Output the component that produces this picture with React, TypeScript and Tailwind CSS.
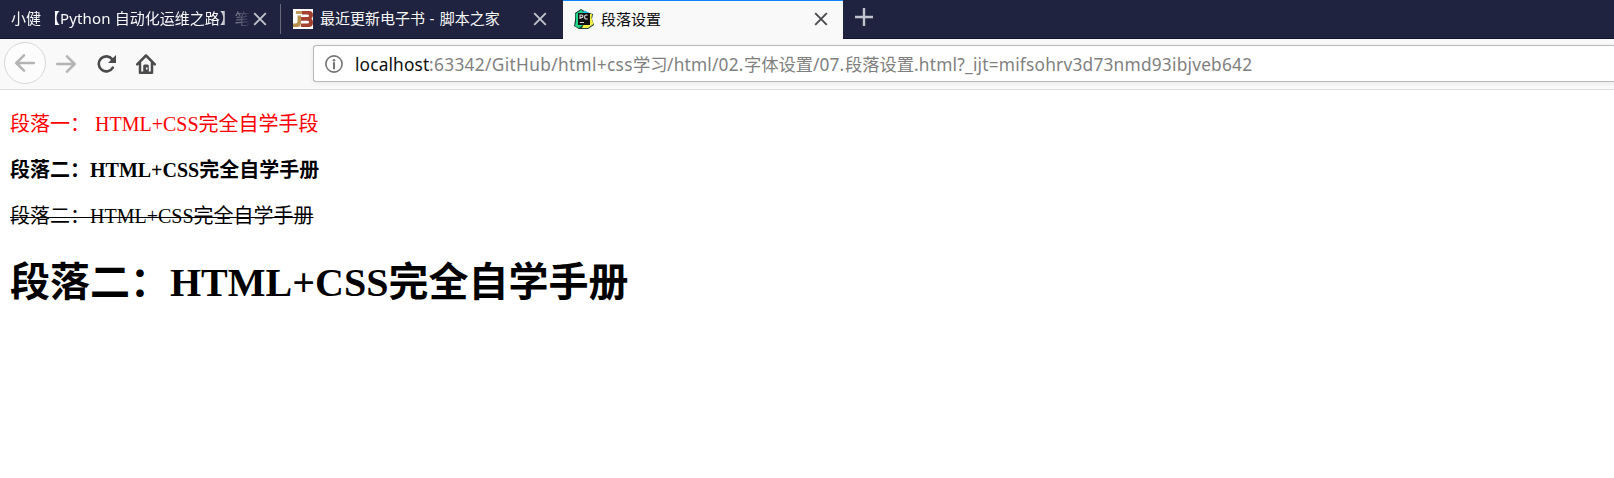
import React from 'react';

const ui = "font-['Noto_Sans','Noto_Sans_CJK_SC',sans-serif]";

function Close({ color }: { color: string }) {
  return (
    <svg width="14" height="14" viewBox="0 0 14 14" className="shrink-0" fill="none" stroke={color} strokeWidth="1.9">
      <path d="M1.2 1.2 12.8 12.8M12.8 1.2 1.2 12.8" />
    </svg>
  );
}

function ScriptHomeIcon() {
  return (
    <svg width="20" height="20" viewBox="0 0 20 20" className="shrink-0">
      <rect width="20" height="20" fill="#fff" />
      <path d="M3 2H9V5H3Z" fill="#c09a60" />
      <path d="M4.5 6.5H8V14Q8 18 4 18H0V14.5H2.5Q4.5 14.5 4.5 12.5Z" fill="#b8904e" />
      <path d="M9 2H16Q20 2 20 6Q20 8 18.5 9.5Q20 11 20 13.5Q20 18 15.5 18H8V14.5H14.5Q16 14.5 16 13.2Q16 11.8 14.5 11.8H8V8H14.5Q16 8 16 6.8Q16 5.5 14.5 5.5H9Z" fill="#a3402f" />
    </svg>
  );
}

function PyCharmIcon() {
  return (
    <svg width="20" height="20" viewBox="0 0 20 20" className="shrink-0">
      <path d="M1 4 7 0 12 3 19 5 18 10 20 16 14 20H5L0 17 1 11Z" fill="#173d30" />
      <path d="M1.5 5 7 1 11 4 9 16 5 19 1 17 2 12Z" fill="#21d789" />
      <path d="M11 1.5 15 4 12 6 8 4Z" fill="#18bfe0" />
      <path d="M15 5 18 5 17.5 9 19.5 15 14 19H8L10 15 16 14Z" fill="#f5ee45" />
      <rect x="4" y="4" width="12" height="12" fill="#111" />
      <path d="M6 10V6H7.4Q9 6 9 7.3T7.4 8.6H6M13.6 6.3Q10.6 5.2 10.6 8T13.6 9.7M5.8 13.5H10" fill="none" stroke="#e0e0e0" strokeWidth="1.1" />
    </svg>
  );
}

export default function App() {
  return (
    <div className="flex h-[478px] w-full flex-col overflow-hidden bg-white">
      <div className={`${ui} flex h-[39px] shrink-0 bg-[#202340] text-[15px] leading-[37px] text-[#f9f9fa] shadow-[inset_0_-1px_0_#14122e]`}>
        <div className="flex h-[37px] w-[280px] shrink-0 items-center pl-[11px]">
          <div className="w-[242px] whitespace-nowrap [mask-image:linear-gradient(to_right,#000_205px,transparent_240px)]">
            <span>小健 【</span><span className="tracking-[0.15px]">Python </span><span>自动化运维之路】</span><span>笔</span>
          </div>
          <Close color="#c2c3cc" />
        </div>
        <div className="mt-1 h-[30px] w-px shrink-0 bg-[#686a7e]" />
        <div className="flex h-[37px] w-[282px] shrink-0 items-center pl-3">
          <ScriptHomeIcon />
          <span className="ml-[7px] w-[213px] whitespace-pre">最近更新电子书<span className="tracking-[0.7px]"> - </span>脚本之家</span>
          <Close color="#c2c3cc" />
        </div>
        <div className="flex h-[39px] w-[280px] shrink-0 items-center border-t border-[#0a84ff] bg-[#f9f9fa] pb-[2px] pl-[11px] text-[#0c0c0d]">
          <PyCharmIcon />
          <span className="ml-[7px] w-[213px] whitespace-nowrap">段落设置</span>
          <Close color="#4a4a4d" />
        </div>
        <svg width="18" height="18" viewBox="0 0 18 18" className="ml-3 mt-2" stroke="#c2c3cc" strokeWidth="2.4">
          <path d="M9 0V18M0 9H18" />
        </svg>
      </div>
      <div className="flex h-[51px] shrink-0 border-b border-[#e0e0e1] bg-[#f9f9fa]">
        <div className="flex w-[313px] shrink-0 items-start pl-1 pt-[3px]">
          <div className="flex size-[42px] items-center justify-center rounded-full border border-[#d8d8d9] bg-[#fcfcfc]">
            <svg width="20" height="18" viewBox="0 0 20 18" fill="none" stroke="#b4b4b5" strokeWidth="2.5" strokeLinecap="round" strokeLinejoin="round">
              <path d="M18.8 9H1.5M9 1.3 1.3 9 9 16.7" />
            </svg>
          </div>
          <svg width="20" height="18" viewBox="0 0 20 18" className="ml-[10px] mt-[13px]" fill="none" stroke="#b4b4b5" strokeWidth="2.5" strokeLinecap="round" strokeLinejoin="round">
            <path d="M1.2 9H18.5M11 1.3 18.7 9 11 16.7" />
          </svg>
          <svg width="20" height="18" viewBox="0 0 20 18" className="ml-[21px] mt-[13px]" fill="none" stroke="#4b4b4d" strokeWidth="2.6" strokeLinecap="round">
            <path d="M15.8 12.6A7.5 7.5 0 1 1 15.3 4.4" />
            <path d="M19 0V8H11Z" fill="#4b4b4d" stroke="none" />
          </svg>
          <svg width="20" height="20" viewBox="0 0 20 20" className="ml-[19px] mt-3" fill="none" stroke="#4b4b4d" strokeWidth="2.5" strokeLinecap="round" strokeLinejoin="round">
            <path d="M1.2 10.3 10 1.5 18.8 10.3M4 9V18.7H16V9" />
            <path d="M7.2 19V12Q7.2 10.5 8.5 10.5H11.5Q12.8 10.5 12.8 12V19Z" fill="#4b4b4d" stroke="none" />
            <rect x="10" y="13.5" width="1.5" height="2" fill="#fff" stroke="none" />
          </svg>
        </div>
        <div className={`${ui} mt-[6px] flex h-[37px] flex-1 items-center overflow-hidden rounded-l-[3px] border border-r-0 border-[#b9b9ba] bg-white pl-[11px] text-[17.3px] text-[#7f7f80] shadow-[0_1px_5px_rgba(0,0,0,0.08)]`}>
          <svg width="18" height="18" viewBox="0 0 18 18" className="shrink-0">
            <circle cx="9" cy="9" r="8.1" fill="none" stroke="#747475" strokeWidth="1.6" />
            <circle cx="9" cy="5.3" r="1.25" fill="#747475" />
            <path d="M9 8V13.5" stroke="#747475" strokeWidth="2.1" strokeLinecap="round" />
          </svg>
          <div className="ml-3 flex whitespace-pre pt-[2px]">
            <span className="w-[74px] tracking-[0.15px] text-[#0c0c0d]">localhost</span>
            <span className="w-[204px] tracking-[0.33px]">:63342/GitHub/html+css</span>
            <span className="w-[34px]">学习</span>
            <span className="w-[77px] tracking-[0.2px]">/html/02.</span>
            <span className="w-[69px]">字体设置</span>
            <span className="w-[32px] tracking-[0.1px]">/07.</span>
            <span className="w-[69px]">段落设置</span>
            <span className="tracking-[0.22px]">.html?_ijt=mifsohrv3d73nmd93ibjveb642</span>
          </div>
        </div>
      </div>
      <main className="flex flex-col pl-[10px] pt-[21px] font-['Liberation_Serif','Noto_Sans_CJK_SC',serif] text-[20px] leading-[26px] text-black">
        <p className="text-[#ff0000]">段落一： HTML+CSS完全自学手段</p>
        <p className="mt-5 font-bold">段落二：HTML+CSS完全自学手册</p>
        <p className="mt-5"><s className="decoration-1">段落二：HTML+CSS完全自学手册</s></p>
        <h1 className="mt-[27px] text-[40px] font-bold leading-[53px]">段落二：HTML+CSS完全自学手册</h1>
      </main>
    </div>
  );
}
